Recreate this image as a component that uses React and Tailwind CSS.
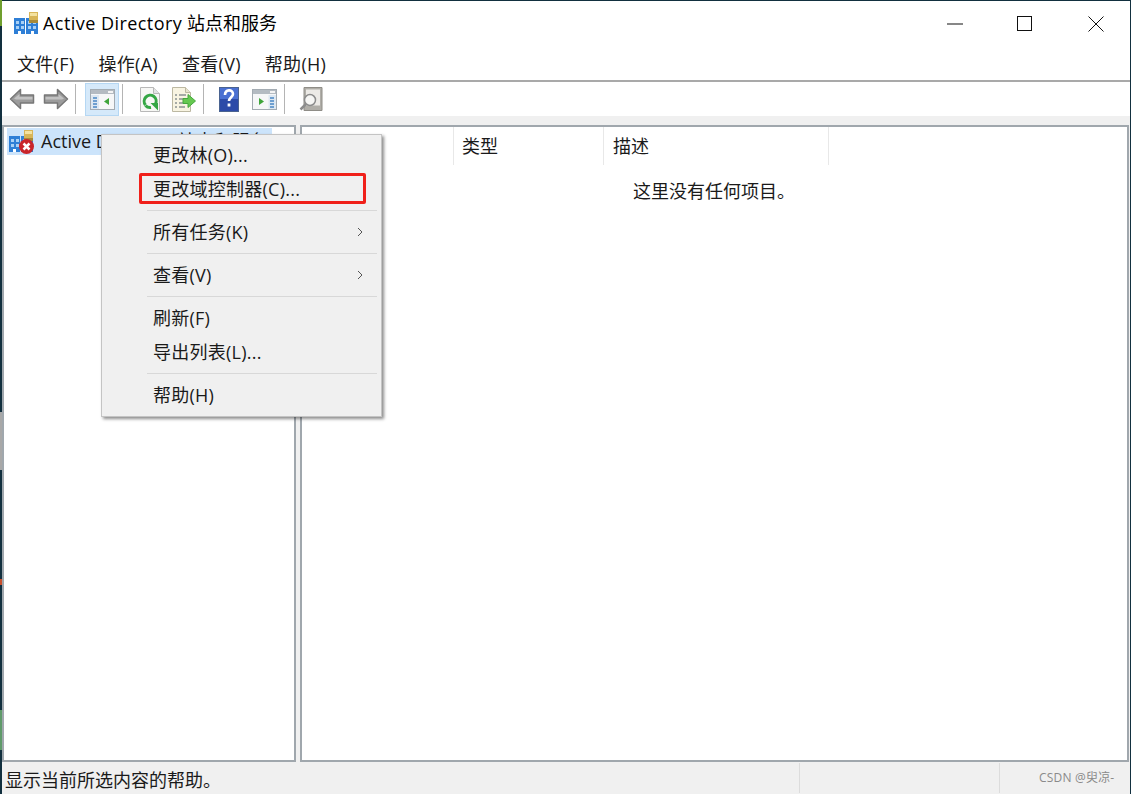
const FONT = "font-['Open_Sans','Noto_Sans_CJK_SC',sans-serif]";

const AppIcon = ({ error }) => (
  <svg width="25" height="24" viewBox="0 0 25 24" className="shrink-0">
    <rect x="0" y="6" width="11" height="16" fill="#2f7fd6" />
    <rect x="12" y="6" width="12" height="16" fill="#2f7fd6" />
    <path d="M2 9h3v3H2zM7 9h3v3H7zM2 14h3v3H2zM7 14h3v3H7zM14 9h3v3h-3zM19 9h3v3h-3zM14 14h3v3h-3zM19 14h3v3h-3z" fill="#a9d0f5" />
    <path d="M4 19h3v3H4zM17 19h3v3h-3z" fill="#fff" />
    <rect x="15" y="0" width="9" height="11" fill="#d8b558" />
    <rect x="16" y="1" width="7" height="3" fill="#f4e2a0" />
    <rect x="15" y="8" width="9" height="3" fill="#a88a3a" />
    {error && (
      <>
        <circle cx="17.500" cy="16.500" r="7.500" fill="#c9252b" />
        <path d="M14.500 13.500l6 6M20.500 13.500l-6 6" stroke="#fff" strokeWidth="2.500" />
      </>
    )}
  </svg>
);

const Arrow = ({ flip }) => (
  <svg width="26" height="22" viewBox="0 0 26 22" className={flip ? "-scale-x-100" : ""}>
    <path d="M1.500 11 11.500 1.500v5.500h13v8h-13v5.500z" fill="#9c9c9c" stroke="#777" strokeWidth="1.500" strokeLinejoin="round" />
    <path d="M5 10.500 10.500 6v3h13v2.500H7z" fill="#c2c2c2" />
  </svg>
);

const PaneIcon = ({ right }) => (
  <svg width="25" height="21" viewBox="0 0 25 21">
    <rect x="0.500" y="0.500" width="24" height="20" fill="#f6f7f8" stroke="#a3abb2" />
    <rect x="1" y="1" width="23" height="4" fill="#b4bbc2" />
    <rect x="18" y="2" width="5" height="2" fill="#f4f4f4" />
    {right ? (
      <>
        <path d="M7 9v7l5-3.500z" fill="#3fa53a" />
        <rect x="16.500" y="6" width="7.500" height="14" fill="#dde8f2" />
        <path d="M18 9h4M18 12h4M18 15h4M18 18h4" stroke="#4a86c5" strokeWidth="1.500" />
      </>
    ) : (
      <>
        <path d="M19 9v7l-5-3.500z" fill="#3fa53a" />
        <rect x="1" y="6" width="8" height="14" fill="#dde8f2" />
        <path d="M3 9h4M3 12h4M3 15h4M3 18h4" stroke="#4a86c5" strokeWidth="1.500" />
      </>
    )}
  </svg>
);

const RefreshIcon = () => (
  <svg width="20" height="25" viewBox="0 0 20 25">
    <path d="M0.500 0.500h13l6 6v18h-19z" fill="#f7f7f5" stroke="#b8b8b8" />
    <path d="M13.500 0.500v6h6" fill="#e3e3e3" stroke="#b8b8b8" />
    <path d="M5.500 18a6 6 0 1 1 10 -1" fill="none" stroke="#35a644" strokeWidth="3" />
    <path d="M5.500 18.500a6 6 0 0 0 5.500 2" fill="none" stroke="#35a644" strokeWidth="3" />
    <path d="M10.500 16h7.500v7.500z" fill="#35a644" />
  </svg>
);

const ExportIcon = () => (
  <svg width="24" height="25" viewBox="0 0 24 25">
    <path d="M0.500 0.500h13l5 5v19h-18z" fill="#f8f4e2" stroke="#bcb8a2" />
    <path d="M13.500 0.500v5h5" fill="#e8e4d0" stroke="#bcb8a2" />
    <path d="M3 8h2M7 8h7M3 12h2M7 12h4M3 16h2M7 16h4M3 20h2M7 20h6" stroke="#55606a" strokeWidth="1.200" />
    <path d="M11 11.500h5V7.500l7.500 6.500-7.500 6.500v-4h-5z" fill="#66c850" stroke="#46a83e" />
  </svg>
);

const HelpIcon = () => (
  <svg width="20" height="25" viewBox="0 0 20 25">
    <rect x="0.500" y="0.500" width="19" height="24" fill="#2c4ba8" stroke="#4a6391" />
    <rect x="1" y="1" width="18" height="11" fill="#4a70d2" />
    <path d="M6 8c0-6 8-6 8-1 0 3-4 3.500-4 7" fill="none" stroke="#fff" strokeWidth="2.600" />
    <rect x="8.600" y="16.500" width="2.800" height="3" fill="#fff" />
  </svg>
);

const FindIcon = () => (
  <svg width="24" height="24" viewBox="0 0 24 24">
    <path d="M5 0.500h18v23H5z" fill="#b0aea8" stroke="#8f8d87" />
    <rect x="7" y="2.500" width="14" height="16" fill="#eceae6" />
    <circle cx="11" cy="13" r="5.500" fill="#f6f6f4" stroke="#8c8c8c" strokeWidth="1.500" />
    <path d="M7 17l-5.500 5.500" stroke="#8c8c8c" strokeWidth="2.500" />
  </svg>
);

const Sep = () => <div className="mx-[1px] h-[30px] w-[1px] bg-[#b4b4b4]" />;

const MenuItem = ({ label, arrow }) => (
  <div className="flex h-[34px] items-center justify-between pl-[51px] pr-[18px] text-[18px] leading-none tracking-[0.25px] text-[#1a1a1a]">
    <span>{label}</span>
    {arrow && (
      <svg width="6" height="10" viewBox="0 0 6 10">
        <path d="M1 1l4 4-4 4" fill="none" stroke="#555" strokeWidth="1" />
      </svg>
    )}
  </div>
);

const MenuLine = () => <div className="my-[4px] ml-[45px] mr-[4px] h-[1px] bg-[#d8d8d8]" />;

const ContextMenu = () => (
  <div className="absolute left-[99px] top-[133px] h-[283px] w-[281px] border border-[#c4c4c4] bg-[#f0f0f0] pt-[3px] shadow-[2px_2px_3px_rgba(0,0,0,0.45)]">
    <MenuItem label="更改林(O)..." />
    <MenuItem label="更改域控制器(C)..." />
    <MenuLine />
    <MenuItem label="所有任务(K)" arrow />
    <MenuLine />
    <MenuItem label="查看(V)" arrow />
    <MenuLine />
    <MenuItem label="刷新(F)" />
    <MenuItem label="导出列表(L)..." />
    <MenuLine />
    <MenuItem label="帮助(H)" />
    <div className="absolute left-[37px] top-[38px] h-[31px] w-[227px] rounded-[2px] border-[3px] border-[#f0201a]" />
  </div>
);

const App = () => {
  return (
    <div className={`relative flex h-[794px] w-[1131px] flex-col border-r border-t border-l-2 border-[#12303f] bg-white text-[#1a1a1a] ${FONT}`}>
      {/* bits of the desktop showing at the window's left edge */}
      <div className="absolute -left-[2px] -top-[1px] h-[26px] w-[2px] bg-[#6f9f2e]" />
      <div className="absolute -left-[2px] top-[411px] h-[58px] w-[2px] bg-[#a8a8a8]" />
      <div className="absolute -left-[2px] top-[578px] h-[6px] w-[2px] bg-[#c8502e]" />
      <div className="absolute -left-[2px] top-[709px] h-[40px] w-[2px] bg-[#5f9a6a]" />

      {/* title bar */}
      <div className="flex h-[45px] items-center bg-white pl-[12px]">
        <AppIcon />
        <span className="mb-[2px] ml-[4px] text-[18px] leading-none text-black">
          <span className="tracking-[0.45px]">Active Directory</span> 站点和服务
        </span>
        <div className="ml-auto flex items-center">
          <svg width="16" height="2" className="mr-[54px]"><rect width="16" height="1" y="0.500" fill="#111" /></svg>
          <svg width="15" height="15" className="mr-[56px]"><rect x="0.500" y="0.500" width="14" height="14" fill="none" stroke="#111" /></svg>
          <svg width="16" height="16" className="mr-[26px]"><path d="M0.500 0.500l15 15M15.500 0.500l-15 15" stroke="#111" /></svg>
        </div>
      </div>

      {/* menu bar */}
      <div className="flex h-[36px] items-center gap-[24px] border-b-2 border-[#a9a9a9] pl-[15px] pt-[1px] text-[18px] leading-none tracking-[0.3px]">
        <span>文件(F)</span>
        <span>操作(A)</span>
        <span>查看(V)</span>
        <span>帮助(H)</span>
      </div>

      {/* toolbar */}
      <div className="flex h-[34px] items-center bg-white pl-[7px]">
        <Arrow />
        <div className="w-[8px]" />
        <Arrow flip />
        <div className="w-[5px]" />
        <Sep />
        <div className="ml-[8px] mr-[2px] mt-[1px] flex h-[33px] w-[34px] items-center justify-center border border-[#b5d7f3] bg-[#d5e9fa]">
          <PaneIcon />
        </div>
        <Sep />
        <div className="ml-[16px]"><RefreshIcon /></div>
        <div className="ml-[12px]"><ExportIcon /></div>
        <div className="w-[6px]" />
        <Sep />
        <div className="ml-[14px]"><HelpIcon /></div>
        <div className="ml-[13px]"><PaneIcon right /></div>
        <div className="w-[6px]" />
        <Sep />
        <div className="ml-[13px]"><FindIcon /></div>
      </div>

      {/* panes */}
      <div className="flex min-h-0 flex-1 flex-col bg-[#f0f0f0] pt-[9px]">
        <div className="flex min-h-0 flex-1 gap-[4px] pr-[1px]">
          <div className="w-[294px] border-2 border-[#a0a7ad] bg-white pl-[3px] pt-[1px]">
            <div className="flex h-[27px] w-[265px] items-center bg-[#cce4fb] pl-[2px] text-[18px] leading-none">
              <AppIcon error />
              <span className="mb-[2px] ml-[7px]">Active Directory 站点和服务</span>
            </div>
          </div>
          <div className="relative flex-1 border-2 border-[#a0a7ad] bg-white">
            <div className="flex h-[38px] text-[18px] leading-none">
              <div className="w-[152px] border-r border-[#e8e8e8]" />
              <div className="flex w-[150px] items-center border-r border-[#e8e8e8] pl-[8px]">类型</div>
              <div className="flex w-[225px] items-center border-r border-[#e8e8e8] pl-[9px]">描述</div>
            </div>
            <div className="mt-[17px] pl-[331px] text-[18px] leading-none text-[#1a1a1a]">这里没有任何项目。</div>
          </div>
        </div>

        {/* status bar */}
        <div className="flex h-[32px] items-center text-[18px] leading-none">
          <div className="w-[797px] pl-[3px] pt-[3px]">显示当前所选内容的帮助。</div>
          <div className="h-[30px] w-[200px] border-l border-[#dcdcdc]" />
          <div className="flex h-[30px] flex-1 items-center border-l border-[#dcdcdc] pl-[39px] text-[12px] tracking-[0.2px] text-[#8a8a8a]">CSDN @臾凉-</div>
        </div>
      </div>

      <ContextMenu />
    </div>
  );
};

export default App;
